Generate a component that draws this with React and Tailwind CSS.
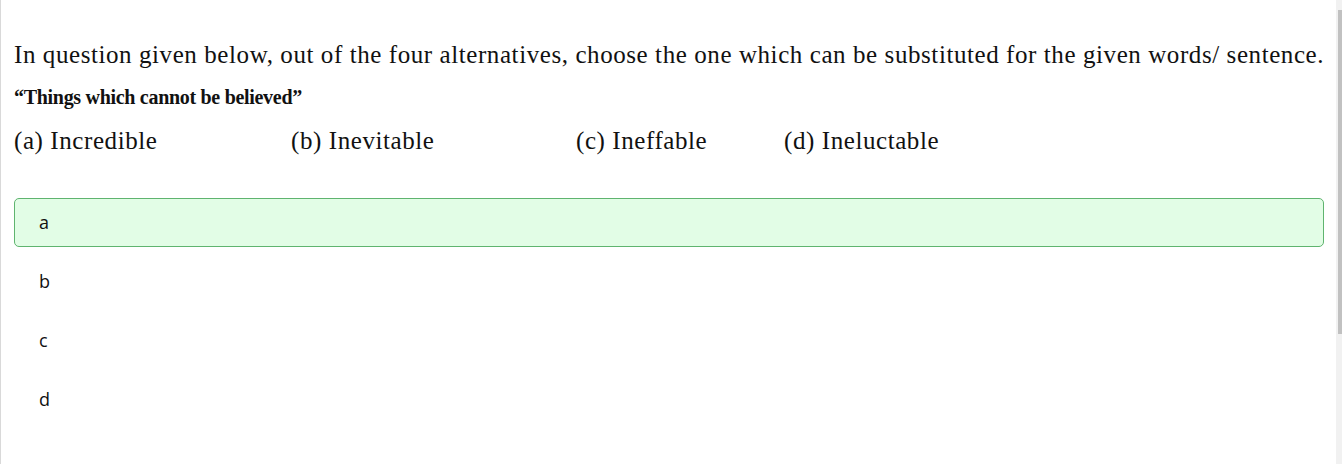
import React from 'react';

const options = ['a', 'b', 'c', 'd'];

const App = () => {
  return (
    <div className="flex h-[464px] w-[1342px] bg-white overflow-hidden">
      {/* Main content */}
      <div className="flex-1 border-l border-[#d9d9d9] pl-[13px] pr-[12px] pt-[33px]">
        <div className="font-['Liberation_Serif','Times_New_Roman',serif] text-[25px] tracking-[0.58px] text-[#111] leading-[43px]">
          <p className="whitespace-nowrap">In question given below, out of the four alternatives, choose the one which can be substituted for the given words/ sentence.</p>
          <p className="font-bold text-[20px] tracking-[-0.3px]">“Things which cannot be believed”</p>
          <p className="flex">
            <span className="w-[277px]">(a) Incredible</span>
            <span className="w-[285px]">(b) Inevitable</span>
            <span className="w-[208px]">(c) Ineffable</span>
            <span>(d) Ineluctable</span>
          </p>
        </div>

        <div className="mt-[36px] flex flex-col gap-[10px] font-['Open_Sans',sans-serif] text-[18px] text-[#111]">
          {options.map((o, i) => (
            <div
              key={o}
              className={
                i === 0
                  ? 'h-[49px] flex items-center pl-[24px] rounded-[5px] border border-[#5fb46f] bg-[#e2fde6]'
                  : 'h-[49px] flex items-center pl-[24px] rounded-[5px] border border-transparent'
              }
            >
              {o}
            </div>
          ))}
        </div>
      </div>

      {/* Scrollbar */}
      <div className="w-[6px] bg-[#f1f1f1] pt-[10px] pl-[2px]">
        <div className="h-[324px] bg-[#c1c1c1]"></div>
      </div>
    </div>
  );
};

export default App;
